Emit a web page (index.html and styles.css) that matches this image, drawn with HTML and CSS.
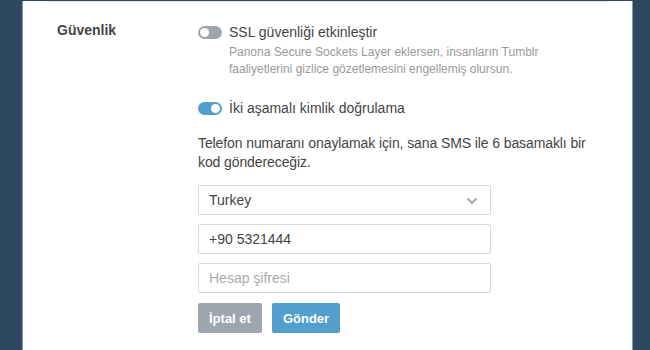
FILE: index.html
```html
<!DOCTYPE html>
<html lang="tr">
<head>
    <meta charset="UTF-8">
    <meta name="viewport" content="width=device-width, initial-scale=1.0">
    <title>Ayarlar - Güvenlik</title>
    <link rel="stylesheet" href="styles.css">
</head>
<body>
    <div class="settings-panel">
        <div class="settings-section">
            <div class="section-label">Güvenlik</div>

            <div class="section-body">
                <div class="toggle-row">
                    <span class="toggle"></span>
                    <span class="toggle-label">SSL güvenliği etkinleştir</span>
                </div>
                <p class="hint">
                    Panona Secure Sockets Layer eklersen, insanların Tumblr
                    faaliyetlerini gizlice gözetlemesini engellemiş olursun.
                </p>

                <div class="toggle-row two-factor">
                    <span class="toggle on"></span>
                    <span class="toggle-label">İki aşamalı kimlik doğrulama</span>
                </div>

                <p class="intro">Telefon numaranı onaylamak için, sana SMS ile 6 basamaklı bir kod göndereceğiz.</p>

                <form class="sms-form">
                    <div class="field select-field">
                        <span class="field-value">Turkey</span>
                        <svg class="chevron" width="12" height="8" viewBox="0 0 12 8">
                            <path d="M1.5 1.5 L6 6 L10.5 1.5" fill="none" stroke="#a8a8a8" stroke-width="2"/>
                        </svg>
                    </div>
                    <div class="field">
                        <span class="field-value">+90 5321444</span>
                    </div>
                    <div class="field">
                        <span class="placeholder">Hesap şifresi</span>
                    </div>
                    <div class="buttons">
                        <button type="button" class="btn btn-cancel">İptal et</button>
                        <button type="button" class="btn btn-send">Gönder</button>
                    </div>
                </form>
            </div>
        </div>
    </div>
</body>
</html>
```

FILE: styles.css
```css
* {
    margin: 0;
    padding: 0;
    box-sizing: border-box;
}

body {
    font-family: "Liberation Sans", Arial, sans-serif;
    background: #2e4862;
    color: #444;
    height: 350px;
    overflow: hidden;
}

.settings-panel {
    margin: 0 17px 0 22px;
    height: 350px;
    background: #fff;
    border-left: 1px solid #8d9bab;
    border-right: 1px solid #8d9bab;
    padding: 0 24px;
}

.settings-section {
    display: grid;
    grid-template-columns: 141px 1fr;
    border-top: 1px solid #e7e7e7;
    margin-top: 1px;
    padding: 20px 10px 0;
}

.section-label {
    font-size: 14px;
    font-weight: bold;
    line-height: 14px;
    padding-top: 1px;
    color: #444;
}

.toggle-row {
    display: flex;
    align-items: center;
    gap: 7px;
    height: 18px;
    margin-top: 1px;
}

.toggle {
    position: relative;
    width: 24px;
    height: 13px;
    border-radius: 7px;
    background: #9da6af;
    flex-shrink: 0;
}

.toggle::after {
    content: "";
    position: absolute;
    top: 2px;
    left: 2px;
    width: 9px;
    height: 9px;
    border-radius: 50%;
    background: #fff;
}

.toggle.on {
    background: #529ecc;
}

.toggle.on::after {
    left: 13px;
}

.toggle-label {
    font-size: 14px;
    color: #444;
}

.hint {
    font-size: 12px;
    line-height: 17px;
    color: #999;
    margin: 3px 0 0 31px;
    width: 340px;
}

.two-factor {
    margin-top: 21px;
}

.intro {
    font-size: 14px;
    line-height: 19px;
    letter-spacing: -0.1px;
    margin-top: 17px;
    width: 400px;
}

.sms-form {
    display: flex;
    flex-direction: column;
    gap: 9px;
    margin-top: 13px;
    width: 293px;
}

.field {
    display: flex;
    align-items: center;
    justify-content: space-between;
    height: 30px;
    padding: 0 12px 0 10px;
    border: 1px solid #d8d8d8;
    border-radius: 2px;
    font-size: 14px;
}

.field-value {
    color: #444;
}

.placeholder {
    color: #aaa;
}

.chevron {
    margin-top: 1px;
}

.buttons {
    display: flex;
    gap: 10px;
    margin-top: 1px;
}

.btn {
    font-family: inherit;
    font-size: 13px;
    font-weight: bold;
    color: #fff;
    height: 30px;
    border: none;
    border-radius: 2px;
    padding: 0 11px;
}

.btn-cancel {
    background: #9da6af;
}

.btn-send {
    background: #529ecc;
}
```
